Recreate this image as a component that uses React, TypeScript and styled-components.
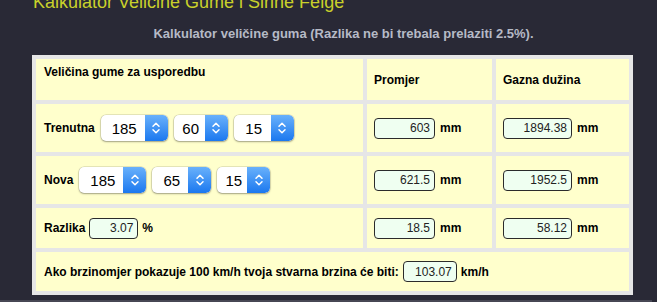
import React from "react";
import styled, { createGlobalStyle } from "styled-components";

const GlobalStyle = createGlobalStyle`
  html, body {
    margin: 0;
    padding: 0;
    background: #292936;
    font-family: "Liberation Sans", Arial, sans-serif;
    overflow: hidden;
  }
`;

const Page = styled.div`
  width: 657px;
  height: 302px;
  overflow: hidden;
  display: flex;
  flex-direction: column;
`;

const Title = styled.h1`
  margin: -8px 0 0 33px;
  font-size: 18px;
  line-height: 20px;
  font-weight: normal;
  color: #c9d12b;
  white-space: nowrap;
`;

const SubtitleRow = styled.div`
  display: flex;
  justify-content: center;
  padding-left: 30px;
  margin-top: 14px;
`;

const Subtitle = styled.p`
  margin: 0;
  font-size: 13px;
  line-height: 16px;
  font-weight: bold;
  color: #b6bac6;
  white-space: nowrap;
`;

const Grid = styled.div`
  margin: 13px 0 0 32px;
  width: 601px;
  box-sizing: border-box;
  padding: 4px;
  gap: 4px;
  background: #e6e6e6;
  display: grid;
  grid-template-columns: 327px 125px 133px;
  grid-template-rows: 41px 48px 48px 40px 39px;
`;

const Cell = styled.div<{ $span?: number; $top?: boolean; $gap?: number; $pl?: number }>`
  background: #ffffcc;
  display: flex;
  align-items: ${(p) => (p.$top ? "flex-start" : "center")};
  padding: ${(p) => (p.$top ? "6px" : "0")} 6px 0 ${(p) => p.$pl ?? 7}px;
  gap: ${(p) => p.$gap ?? 5}px;
  grid-column: span ${(p) => p.$span ?? 1};
  white-space: nowrap;
`;

const Label = styled.span`
  font-size: 12px;
  line-height: 14px;
  font-weight: bold;
  color: #000;
`;

const SelectBox = styled.div<{ $w: number }>`
  width: ${(p) => p.$w}px;
  height: 26px;
  box-sizing: border-box;
  display: flex;
  align-items: stretch;
  background: #fff;
  border-radius: 5px;
  box-shadow: 0 0 0 0.5px rgba(0, 0, 0, 0.18), 0 1px 2px rgba(0, 0, 0, 0.3);
  overflow: hidden;
`;

const SelectValue = styled.span`
  flex: 1;
  display: flex;
  align-items: center;
  justify-content: center;
  padding-left: 3px;
  font-size: 15px;
  color: #000;
`;

const Stepper = styled.span`
  width: 23px;
  flex: none;
  display: flex;
  align-items: center;
  justify-content: center;
  background: linear-gradient(#69b1fb, #1b78ef);
  border-radius: 0 5px 5px 0;
`;

const OutputField = styled.span<{ $w: number }>`
  width: ${(p) => p.$w}px;
  height: 21px;
  box-sizing: border-box;
  display: flex;
  align-items: center;
  justify-content: flex-end;
  padding-right: 4px;
  border: 1px solid #2b2b2b;
  border-radius: 4px;
  background: #effff1;
  font-size: 12px;
  color: #222;
`;

const BottomBar = styled.div`
  margin-top: 5px;
  width: 652px;
  height: 2px;
  background: #474754;
`;

function Chevrons() {
  return (
    <svg width="10" height="16" viewBox="0 0 10 16" fill="none">
      <path d="M2 6.2 L5 3.2 L8 6.2" stroke="#fff" strokeWidth="1.5" strokeLinecap="round" strokeLinejoin="round" />
      <path d="M2 9.8 L5 12.8 L8 9.8" stroke="#fff" strokeWidth="1.5" strokeLinecap="round" strokeLinejoin="round" />
    </svg>
  );
}

function Select({ value, w }: { value: string; w: number }) {
  return (
    <SelectBox $w={w}>
      <SelectValue>{value}</SelectValue>
      <Stepper>
        <Chevrons />
      </Stepper>
    </SelectBox>
  );
}

function Out({ value, w, unit }: { value: string; w: number; unit: string }) {
  return (
    <>
      <OutputField $w={w}>{value}</OutputField>
      <Label>{unit}</Label>
    </>
  );
}

export default function App() {
  return (
    <>
      <GlobalStyle />
      <Page>
        <Title>Kalkulator Veličine Gume i Širine Felge</Title>
        <SubtitleRow>
          <Subtitle>Kalkulator veličine guma (Razlika ne bi trebala prelaziti 2.5%).</Subtitle>
        </SubtitleRow>
        <Grid>
          <Cell $top $pl={8}>
            <Label>Veličina gume za usporedbu</Label>
          </Cell>
          <Cell>
            <Label>Promjer</Label>
          </Cell>
          <Cell>
            <Label>Gazna dužina</Label>
          </Cell>

          <Cell $pl={8} $gap={6}>
            <Label>Trenutna</Label>
            <Select value="185" w={67} />
            <Select value="60" w={54} />
            <Select value="15" w={60} />
          </Cell>
          <Cell>
            <Out value="603" w={61} unit="mm" />
          </Cell>
          <Cell>
            <Out value="1894.38" w={69} unit="mm" />
          </Cell>

          <Cell $pl={8} $gap={6}>
            <Label>Nova</Label>
            <Select value="185" w={67} />
            <Select value="65" w={59} />
            <Select value="15" w={53} />
          </Cell>
          <Cell>
            <Out value="621.5" w={61} unit="mm" />
          </Cell>
          <Cell>
            <Out value="1952.5" w={69} unit="mm" />
          </Cell>

          <Cell $pl={8} $gap={4}>
            <Label>Razlika</Label>
            <Out value="3.07" w={49} unit="%" />
          </Cell>
          <Cell>
            <Out value="18.5" w={61} unit="mm" />
          </Cell>
          <Cell>
            <Out value="58.12" w={69} unit="mm" />
          </Cell>

          <Cell $span={3} $pl={8} $gap={4}>
            <Label>Ako brzinomjer pokazuje 100 km/h tvoja stvarna brzina će biti:</Label>
            <Out value="103.07" w={54} unit="km/h" />
          </Cell>
        </Grid>
        <BottomBar />
      </Page>
    </>
  );
}
